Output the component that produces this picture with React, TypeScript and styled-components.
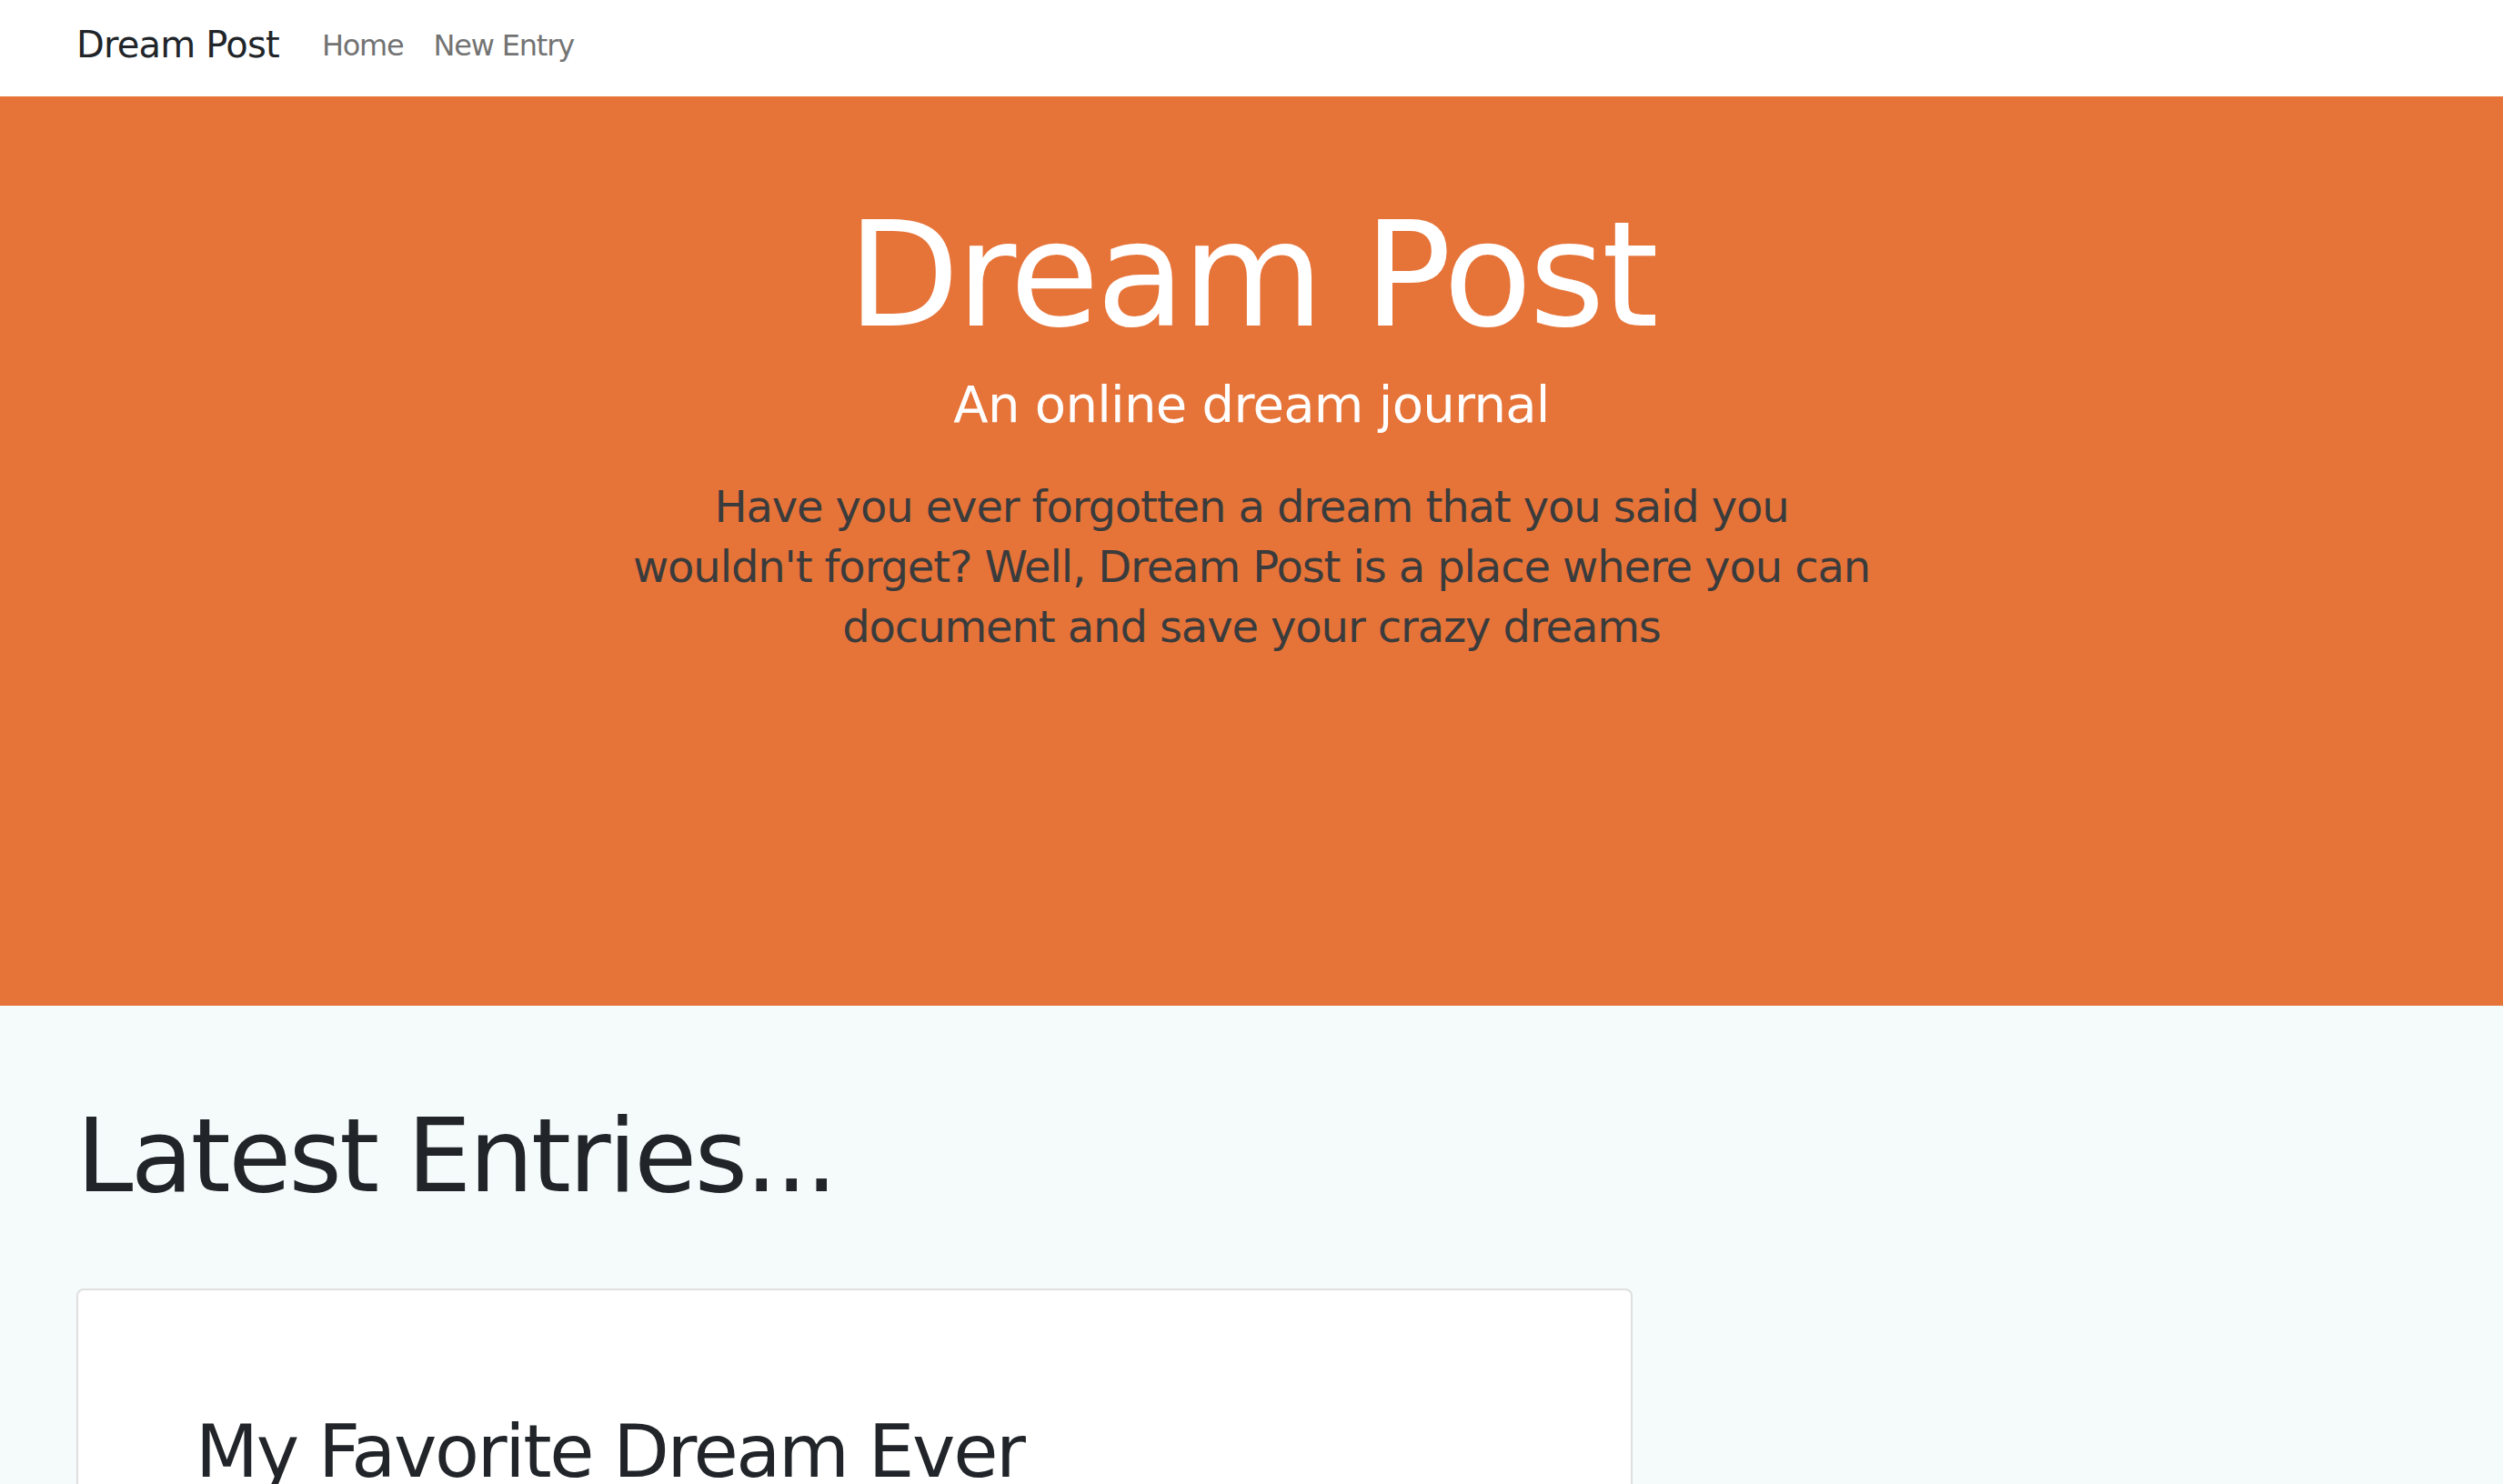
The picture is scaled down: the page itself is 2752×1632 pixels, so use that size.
import React from "react";
import styled, { createGlobalStyle } from "styled-components";

const GlobalStyle = createGlobalStyle`
  html, body {
    margin: 0;
    padding: 0;
    background: #f5fbfb;
  }
  body {
    font-family: "DejaVu Sans", "Liberation Sans", sans-serif;
    color: #212529;
  }
  * { box-sizing: border-box; }
`;

const Page = styled.div`
  min-height: 1632px;
  background: #f5fbfb;
`;

const NavBar = styled.nav`
  height: 106px;
  background: #ffffff;
  display: flex;
  align-items: center;
  padding: 0 84px 6px;
  gap: 47px;
`;

const Brand = styled.a`
  font-size: 40px;
  letter-spacing: -0.8px;
  color: #212529;
  text-decoration: none;
  line-height: 1;
  padding-bottom: 2px;
`;

const NavLinks = styled.div`
  display: flex;
  gap: 33px;
`;

const NavLink = styled.a`
  font-size: 32px;
  letter-spacing: -1.2px;
  color: #737373;
  text-decoration: none;
  line-height: 1;
`;

const Hero = styled.header`
  height: 1000px;
  background: #e67338;
  padding-top: 101px;
  display: flex;
  flex-direction: column;
  align-items: center;
  text-align: center;
`;

const HeroTitle = styled.h1`
  margin: 0;
  font-size: 160px;
  line-height: 192px;
  font-weight: 400;
  letter-spacing: -3.5px;
  color: #ffffff;
`;

const HeroSubtitle = styled.h3`
  margin: 12px 0 0;
  font-size: 56px;
  line-height: 67px;
  font-weight: 400;
  letter-spacing: -0.7px;
  color: #ffffff;
`;

const Lead = styled.p`
  margin: 46px 0 0;
  width: 1388px;
  font-size: 48px;
  line-height: 66px;
  letter-spacing: -1.1px;
  color: #3a3b3c;
`;

const Entries = styled.section`
  padding: 98px 84px 0;
`;

const SectionTitle = styled.h2`
  margin: 0;
  font-size: 112px;
  line-height: 134px;
  font-weight: 400;
  letter-spacing: -2.6px;
  color: #212529;
`;

const Card = styled.article`
  margin-top: 79px;
  width: 1711px;
  min-height: 500px;
  background: #ffffff;
  border: 2px solid #dfdfdf;
  border-radius: 8px;
  padding: 130px 126px 60px 129px;
`;

const CardTitle = styled.h1`
  margin: 0;
  font-size: 80px;
  line-height: 96px;
  font-weight: 400;
  letter-spacing: -2.3px;
  color: #212529;
`;

export default function App() {
  return (
    <Page>
      <GlobalStyle />
      <NavBar>
        <Brand href="#">Dream Post</Brand>
        <NavLinks>
          <NavLink href="#">Home</NavLink>
          <NavLink href="#">New Entry</NavLink>
        </NavLinks>
      </NavBar>
      <Hero>
        <HeroTitle>Dream Post</HeroTitle>
        <HeroSubtitle>An online dream journal</HeroSubtitle>
        <Lead>
          Have you ever forgotten a dream that you said you wouldn't forget? Well,
          Dream Post is a place where you can document and save your crazy dreams
        </Lead>
      </Hero>
      <Entries>
        <SectionTitle>Latest Entries...</SectionTitle>
        <Card>
          <CardTitle>My Favorite Dream Ever</CardTitle>
        </Card>
      </Entries>
    </Page>
  );
}
